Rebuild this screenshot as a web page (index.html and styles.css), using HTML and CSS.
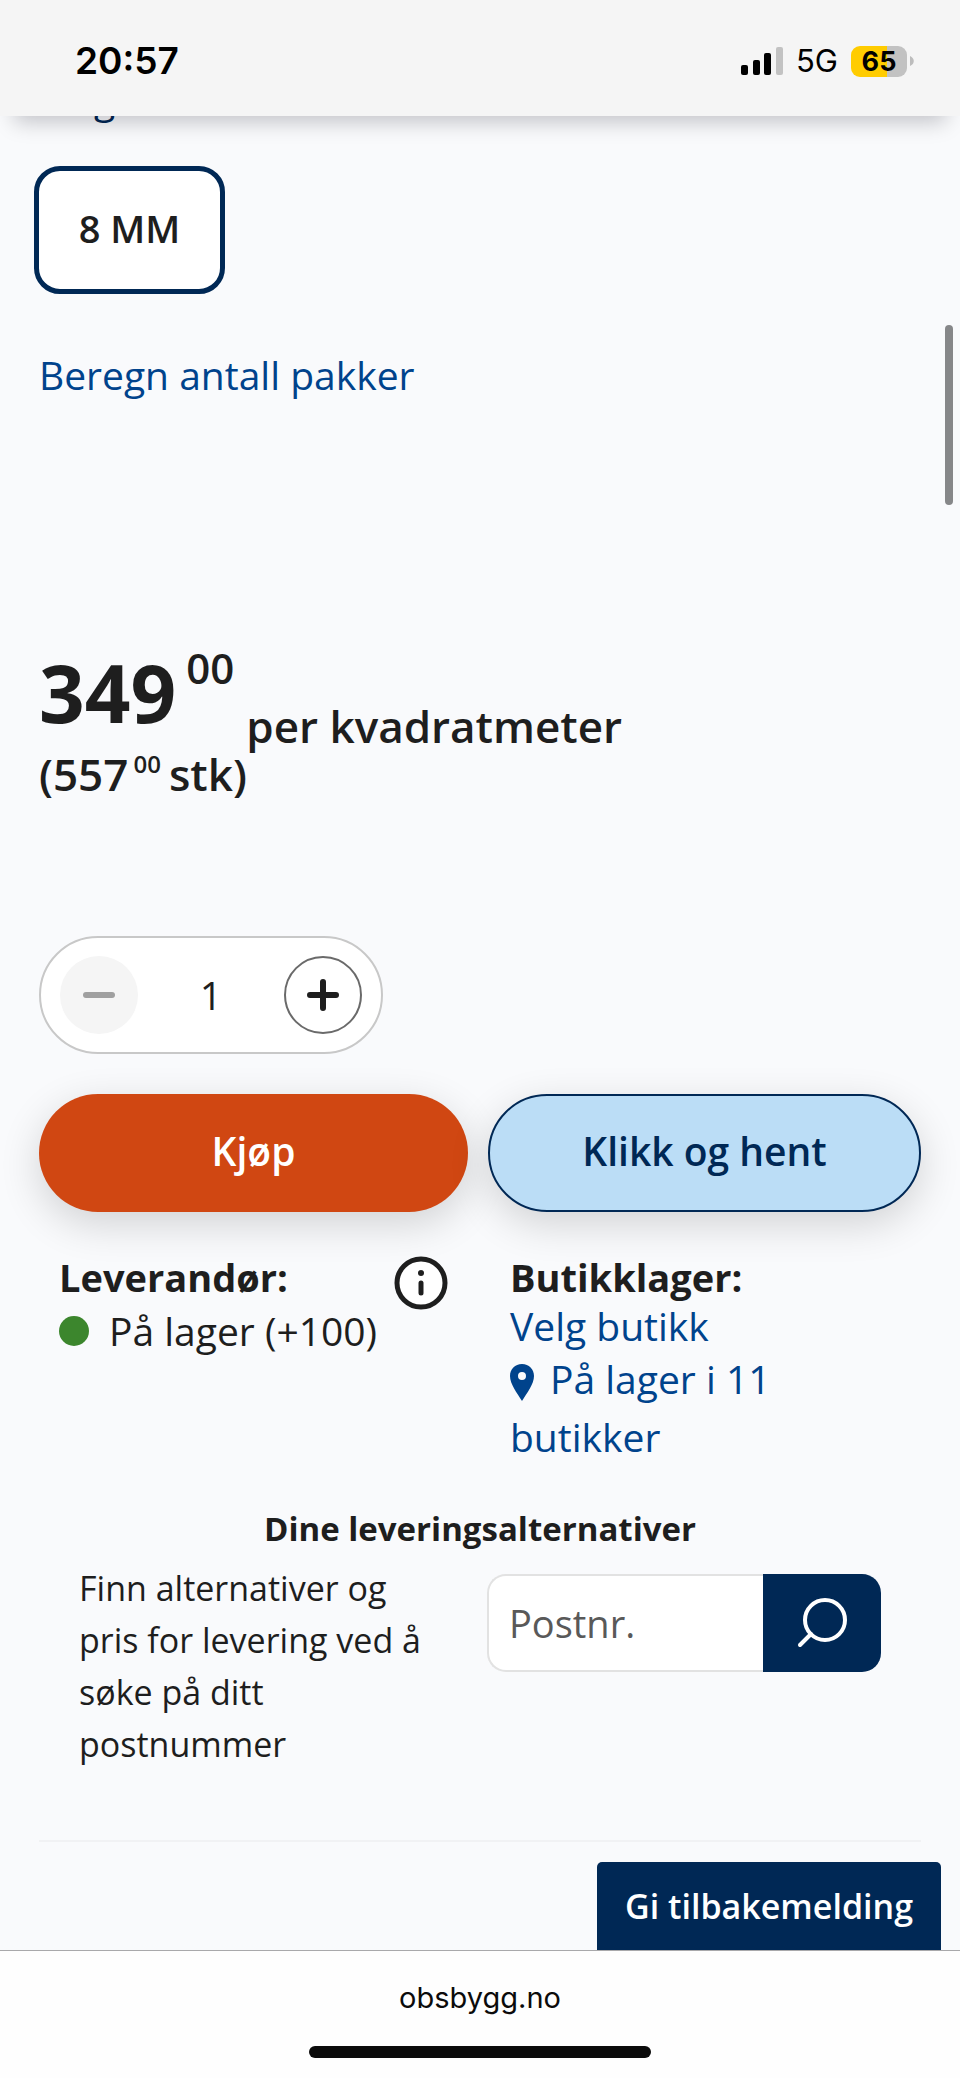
FILE: index.html
```html
<!DOCTYPE html>
<html lang="no">
<head>
<meta charset="utf-8">
<meta name="viewport" content="width=device-width, initial-scale=1">
<title>Obs BYGG</title>
<link rel="stylesheet" href="styles.css">
</head>
<body>
<header class="status">
  <time class="status-time">20:57</time>
  <div class="status-icons">
    <svg class="signal" width="42" height="28" viewBox="0 0 42 28" aria-hidden="true">
      <rect x="0" y="18" width="7" height="10" rx="2"/>
      <rect x="12" y="13" width="7" height="15" rx="2"/>
      <rect x="23" y="6" width="7" height="22" rx="2"/>
      <rect x="35" y="0" width="7" height="28" rx="2" fill="#c2c2c2"/>
    </svg>
    <span class="network">5G</span>
    <span class="battery"><span class="battery-level">65</span><svg width="4" height="10" viewBox="0 0 4 10" aria-hidden="true"><path d="M0 0C5 2 5 8 0 10Z" fill="#bdbdbd"/></svg></span>
  </div>
</header>

<main class="page">
  <p class="variant-label">Velg</p>
  <button class="variant" type="button">8 MM</button>
  <a class="link calc" href="#">Beregn antall pakker</a>

  <div class="price">
    <span class="price-main">349</span>
    <span class="price-cents">00</span>
    <span class="price-unit">per kvadratmeter</span>
  </div>
  <div class="piece"><span>(557</span><span class="piece-cents">00</span><span>stk)</span></div>

  <div class="stepper">
    <button class="step step-minus" type="button" aria-label="Færre" disabled>
      <svg width="32" height="32" viewBox="0 0 32 32" fill="none" stroke="#a0a0a0" stroke-width="6" stroke-linecap="round"><path d="M3 16H29"/></svg>
    </button>
    <input class="amount" type="text" value="1" aria-label="Antall">
    <button class="step step-plus" type="button" aria-label="Flere">
      <svg width="32" height="32" viewBox="0 0 32 32" fill="none" stroke="#1e1e1e" stroke-width="6" stroke-linecap="round"><path d="M3 16H29M16 3V29"/></svg>
    </button>
  </div>

  <div class="actions">
    <button class="action buy" type="button">Kjøp</button>
    <button class="action collect" type="button">Klikk og hent</button>
  </div>

  <div class="stock">
    <section class="supplier">
      <div>
        <h2 class="stock-title">Leverandør:</h2>
        <p class="supplier-status"><span class="dot"></span>På lager (+100)</p>
      </div>
      <button class="info" type="button" aria-label="Informasjon">
        <svg width="54" height="54" viewBox="0 0 54 54" fill="none">
          <circle cx="27" cy="27" r="24" fill="#fff" stroke="#1e1e1e" stroke-width="5"/>
          <circle cx="27" cy="17" r="3" fill="#1e1e1e"/>
          <path d="M27 27V37" stroke="#1e1e1e" stroke-width="5" stroke-linecap="round"/>
        </svg>
      </button>
    </section>
    <section class="store">
      <h2 class="stock-title">Butikklager:</h2>
      <a class="link store-pick" href="#">Velg butikk</a>
      <a class="link store-count" href="#"><svg class="pin" width="24" height="37" viewBox="0 0 24 37" aria-hidden="true"><path fill="#00438c" fill-rule="evenodd" d="M12 0C5 0 0 5 0 12C0 20 7 29 12 37C17 29 24 20 24 12C24 5 19 0 12 0ZM12 8A4 4 0 1 1 12 16A4 4 0 1 1 12 8Z"/></svg>På lager i 11 butikker</a>
    </section>
  </div>

  <section class="delivery">
    <h2 class="delivery-title">Dine leveringsalternativer</h2>
    <div class="delivery-row">
      <label class="delivery-text" for="postnr">Finn alternativer og pris for levering ved å søke på ditt postnummer</label>
      <form class="search">
        <input class="search-input" id="postnr" type="text" placeholder="Postnr.">
        <button class="search-button" type="button" aria-label="Søk">
          <svg width="50" height="50" viewBox="0 0 50 50" fill="none" stroke="#fff" stroke-width="4" stroke-linecap="round"><circle cx="28" cy="22" r="20"/><path d="M14 36L3 47"/></svg>
        </button>
      </form>
    </div>
  </section>
  <hr class="rule">
  <button class="feedback" type="button">Gi tilbakemelding</button>
  <div class="scroll-thumb"></div>
</main>

<footer class="browser-bar">
  <span class="address">obsbygg.no</span>
  <div class="home-indicator"></div>
</footer>
</body>
</html>
```
FILE: styles.css
```css
* { box-sizing: border-box; margin: 0; padding: 0; }

body {
  display: flex;
  flex-direction: column;
  min-height: 100vh;
  background: #f9fafc;
  color: #1e1e1e;
  font: 400 39px/48px "Open Sans", "Noto Sans", sans-serif;
}

button, input { font: inherit; color: inherit; border: 0; }
.link { color: #00438c; text-decoration: none; }

.status {
  position: relative;
  z-index: 2;
  display: flex;
  justify-content: space-between;
  height: 116px;
  padding: 37px 46px 0 75px;
  background: #f5f5f5;
  box-shadow: 0 20px 20px -14px rgba(0, 0, 20, .22);
  color: #000;
  font-family: Inter, sans-serif;
}
.status-time { font-size: 37px; font-weight: 600; line-height: 48px; }
.status-icons { display: flex; align-items: center; gap: 13px; height: 48px; }
.network { font-size: 31px; line-height: 46px; }
.battery { display: flex; align-items: center; gap: 3px; }
.battery-level {
  width: 56px;
  border-radius: 9px;
  background: linear-gradient(90deg, #fc0 65%, #c2c2c2 65%);
  font-size: 27px;
  font-weight: 700;
  line-height: 31px;
  text-align: center;
}

.page {
  position: relative;
  flex: 1;
  display: flex;
  flex-direction: column;
  align-items: flex-start;
  padding: 0 39px 107px;
}
.variant-label { margin-top: -41px; color: #002855; }
.variant {
  min-width: 191px;
  height: 128px;
  margin: 43px 0 0 -5px;
  padding-bottom: 4px;
  border: 5px solid #002855;
  border-radius: 26px;
  background: #fff;
  font-size: 38px;
  font-weight: 600;
}
.calc { margin-top: 57px; }

.price { display: flex; align-items: flex-start; height: 108px; margin-top: 243px; font-weight: 600; }
.price-main { font-size: 80px; font-weight: 700; line-height: 100px; }
.price-cents { margin-left: 10px; font-size: 42px; line-height: 52px; }
.price-unit { align-self: flex-end; margin-left: 12px; font-size: 44px; }
.piece { display: flex; font-size: 44px; font-weight: 600; }
.piece-cents { margin: 0 8px 0 5px; font-size: 24px; line-height: 28px; }

.stepper {
  display: flex;
  align-items: center;
  justify-content: space-between;
  width: 344px;
  height: 118px;
  margin-top: 138px;
  padding: 0 19px;
  border: 2px solid #c8c8c8;
  border-radius: 59px;
  background: #fff;
}
.step { display: grid; place-items: center; width: 78px; height: 78px; border-radius: 50%; }
.step-minus { background: #f5f5f5; }
.step-plus { border: 2px solid #6a6a6a; background: #fff; }
.amount { width: 80px; background: transparent; text-align: center; }

.actions { display: flex; gap: 20px; align-self: stretch; margin-top: 40px; }
.action {
  flex: 1 1 0;
  height: 118px;
  padding-bottom: 4px;
  border-radius: 59px;
  box-shadow: 0 12px 40px rgba(0, 0, 0, .16);
  font-weight: 600;
}
.buy { background: #d04712; color: #fff; }
.collect { border: 2px solid #002855; background: #bbddf6; color: #002855; }

.stock { display: grid; grid-template-columns: 1fr 1fr; gap: 20px; align-self: stretch; margin-top: 40px; }
.supplier { display: flex; justify-content: space-between; align-items: flex-start; padding-left: 20px; }
.stock-title { font-size: 38px; font-weight: 700; line-height: 50px; }
.supplier-status { display: flex; align-items: center; gap: 20px; line-height: 58px; white-space: nowrap; }
.dot { width: 30px; height: 30px; border-radius: 50%; background: #3c862d; }
.info { margin: 4px 22px 0 0; background: none; line-height: 0; }
.store { max-width: 320px; padding-left: 20px; }
.store-pick, .store-count { display: block; }
.store-count { line-height: 58px; }
.pin { margin-right: 16px; vertical-align: -7px; }

.delivery { align-self: stretch; margin-top: 37px; padding: 0 40px; font-size: 34px; line-height: 52px; }
.delivery-title { font-size: 33px; font-weight: 700; text-align: center; }
.delivery-row { display: flex; justify-content: space-between; align-items: flex-start; margin-top: 7px; }
.delivery-text { width: 360px; }
.search { display: flex; width: 394px; height: 98px; margin-top: 12px; }
.search-input {
  flex: 1;
  min-width: 0;
  padding: 0 20px;
  border: 2px solid #e2e2e2;
  border-right: 0;
  border-radius: 19px 0 0 19px;
  background: #fff;
  font-size: 38px;
}
.search-input::placeholder { color: #595959; opacity: 1; }
.search-button {
  display: grid;
  place-items: center;
  width: 118px;
  border-radius: 0 19px 19px 0;
  background: #002855;
}

.rule { align-self: stretch; margin-top: 70px; border: 0; border-top: 2px solid #f1f2f4; }
.feedback {
  position: absolute;
  right: 19px;
  bottom: 0;
  width: 344px;
  height: 88px;
  border-radius: 5px 5px 0 0;
  background: #002855;
  color: #fff;
  font-size: 34px;
  font-weight: 600;
}
.scroll-thumb {
  position: absolute;
  top: 209px;
  right: 7px;
  width: 8px;
  height: 180px;
  border-radius: 4px;
  background: #868789;
}

.browser-bar {
  display: flex;
  flex-direction: column;
  align-items: center;
  height: 128px;
  padding-top: 29px;
  border-top: 1px solid #a9a9ab;
  background: #fefefe;
  color: #0b0b0b;
  font-family: Inter, sans-serif;
}
.address { font-size: 29px; line-height: 36px; }
.home-indicator { width: 342px; height: 12px; margin-top: 30px; border-radius: 6px; background: #0b0b0b; }
```
